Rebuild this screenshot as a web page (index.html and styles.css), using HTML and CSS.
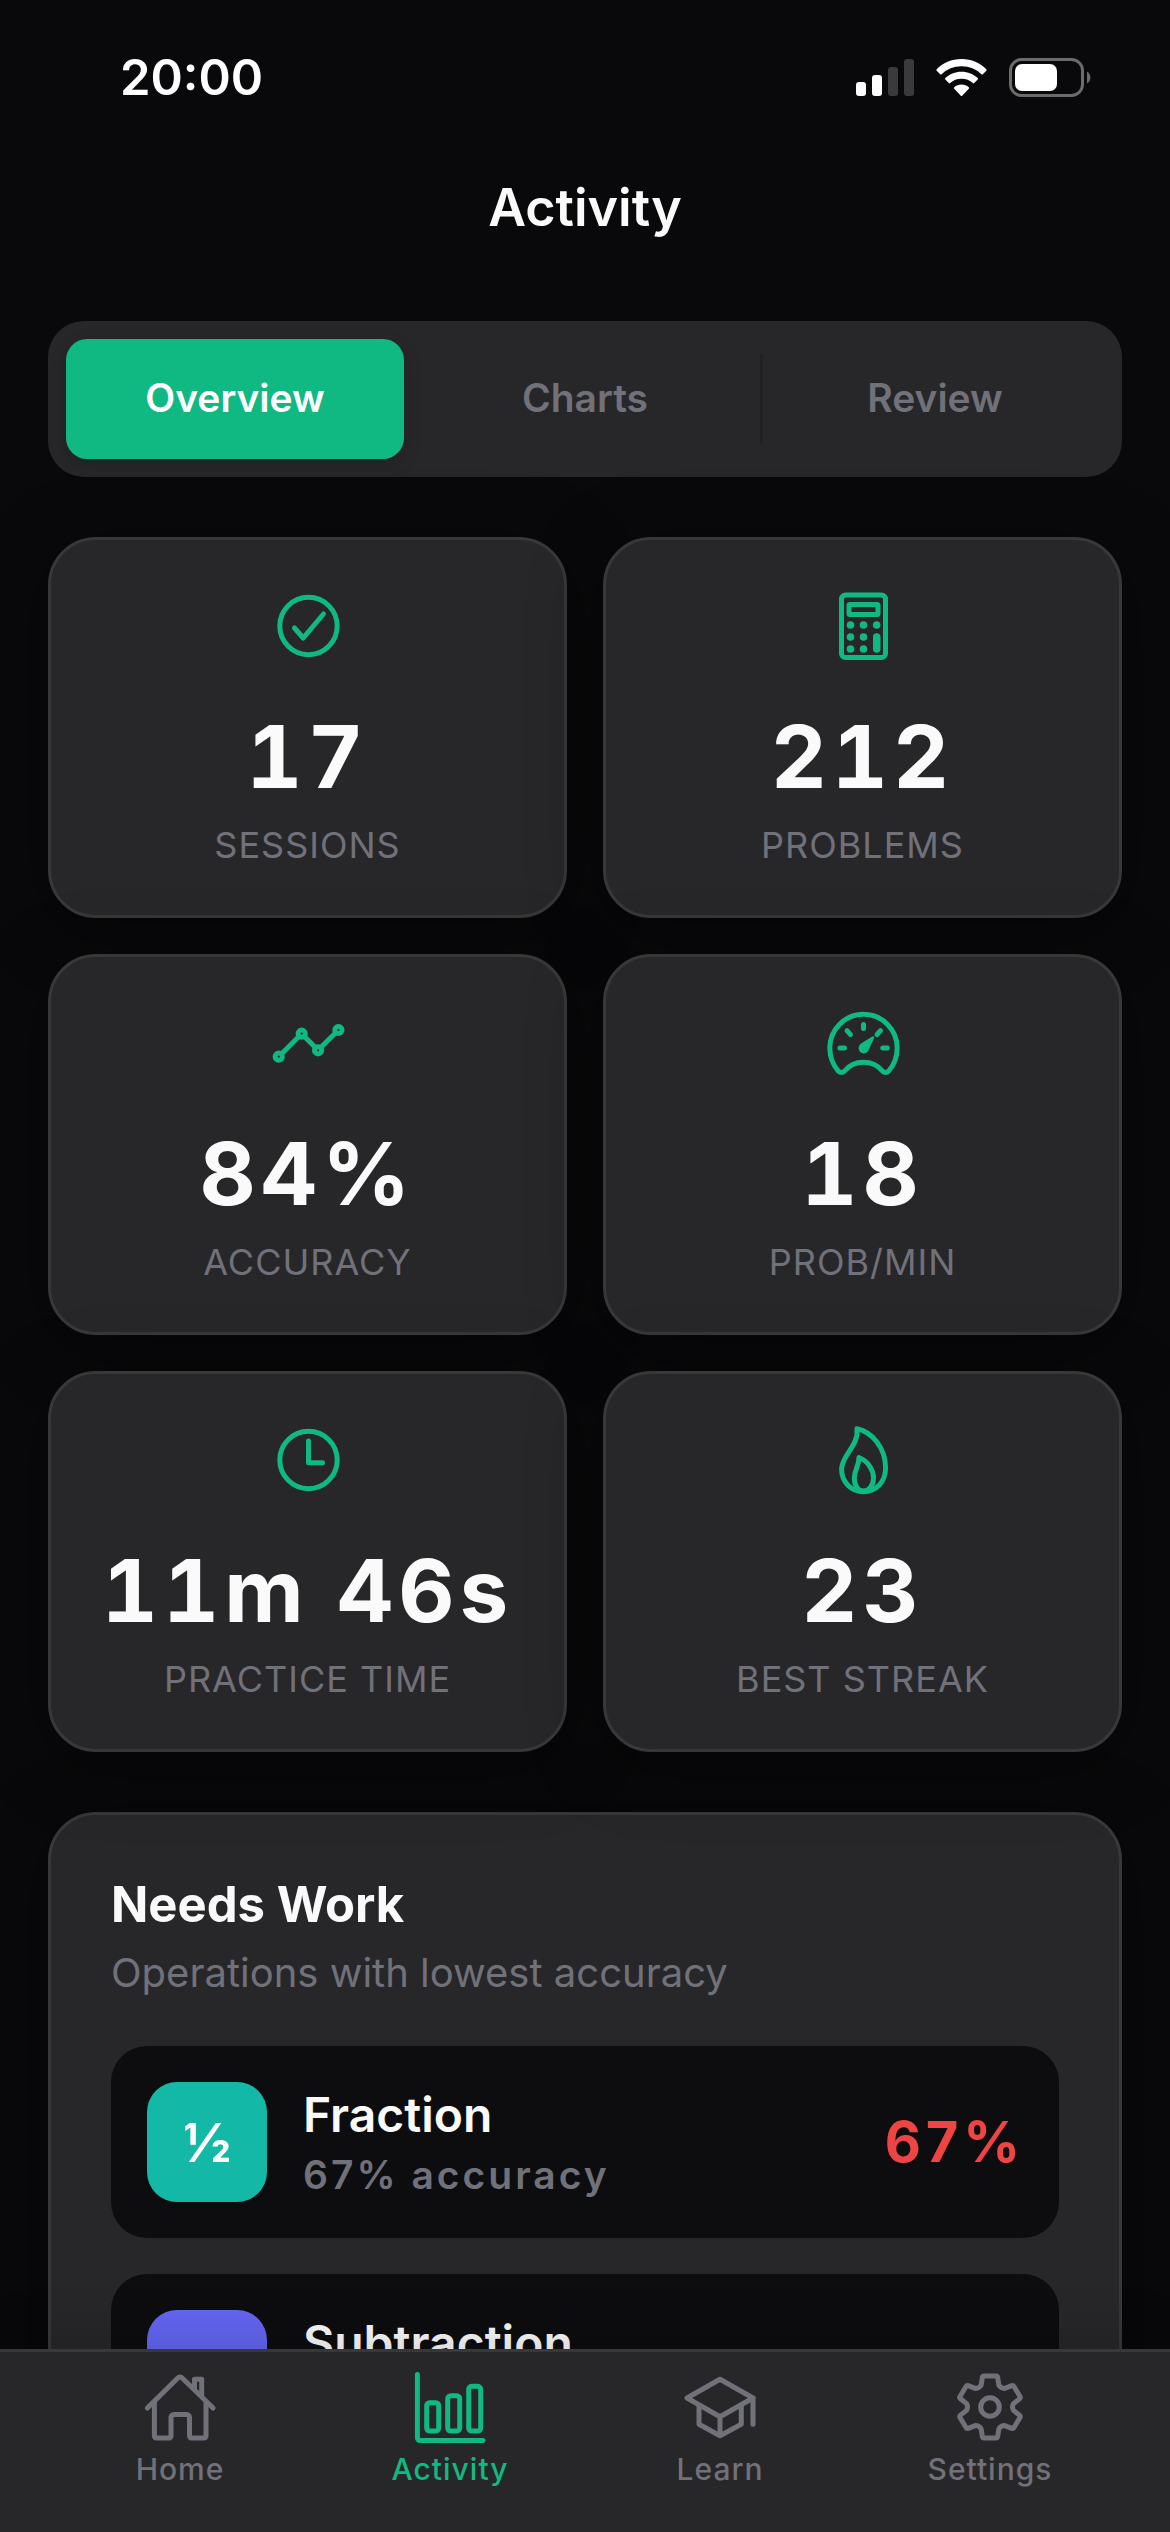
FILE: index.html
```html
<!DOCTYPE html>
<html lang="en">
<head>
    <meta charset="UTF-8">
    <meta name="viewport" content="width=device-width, initial-scale=1.0">
    <title>Activity</title>
    <link rel="stylesheet" href="styles.css">
</head>
<body>
<div class="app">
    <!-- Status bar -->
    <div class="status-bar">
        <span class="status-time">20:00</span>
        <div class="status-icons">
            <svg width="58" height="38" viewBox="0 0 58 38" aria-hidden="true">
                <rect x="0" y="23" width="10" height="14" rx="3" fill="#fff"/>
                <rect x="16" y="16" width="10" height="21" rx="3" fill="#fff"/>
                <rect x="32" y="8" width="10" height="29" rx="3" fill="#3a3a3c"/>
                <rect x="48" y="0" width="10" height="37" rx="3" fill="#3a3a3c"/>
            </svg>
            <svg width="51" height="38" viewBox="0 0 51 38" fill="#fff" aria-hidden="true">
                <path d="M25.500 0C35.500 0 44.300 4 50.300 10.300a1 1 0 0 1 0 1.400L46.800 15.200a1 1 0 0 1-1.400 0A28.500 28.500 0 0 0 25.500 7.300 28.500 28.500 0 0 0 5.600 15.200a1 1 0 0 1-1.400 0L.7 11.700a1 1 0 0 1 0-1.400C6.700 4 15.500 0 25.500 0Z"/>
                <path d="M25.500 12.700c6.300 0 12 2.400 16.200 6.400a1 1 0 0 1 0 1.400l-3.500 3.600a1 1 0 0 1-1.400 0A16.300 16.300 0 0 0 25.500 19.800a16.300 16.300 0 0 0-11.300 4.300 1 1 0 0 1-1.400 0l-3.500-3.600a1 1 0 0 1 0-1.400c4.200-4 9.900-6.400 16.200-6.400Z"/>
                <path d="M25.500 25.500c2.800 0 5.300 1 7.300 2.700a1 1 0 0 1 0 1.500l-6.400 6.700a1.200 1.200 0 0 1-1.800 0l-6.400-6.700a1 1 0 0 1 0-1.500c2-1.700 4.500-2.700 7.300-2.700Z"/>
            </svg>
            <svg width="82" height="39" viewBox="0 0 82 39" aria-hidden="true">
                <rect x="1.500" y="1.500" width="72" height="36" rx="11" fill="none" stroke="#6b6b6c" stroke-width="3"/>
                <rect x="6" y="6" width="42" height="27" rx="7" fill="#fff"/>
                <path d="M78 13.500a7 7 0 0 1 0 12Z" fill="#6b6b6c"/>
            </svg>
        </div>
    </div>

    <header class="header">
        <h1 class="header-title">Activity</h1>
    </header>

    <main class="content">
        <div class="segments" role="tablist">
            <button class="segment active" type="button" role="tab" aria-selected="true">Overview</button>
            <button class="segment" type="button" role="tab" aria-selected="false">Charts</button>
            <button class="segment divided" type="button" role="tab" aria-selected="false">Review</button>
        </div>

        <!-- Stats -->
        <section class="stats">
            <div class="stat-card">
                <svg class="stat-icon" viewBox="0 0 76 76">
                    <circle cx="38.500" cy="38" r="28.700"/>
                    <path d="M24.500 40 33.200 50 53.500 26"/>
                </svg>
                <div class="stat-value">17</div>
                <div class="stat-label">SESSIONS</div>
            </div>
            <div class="stat-card">
                <svg class="stat-icon" viewBox="0 0 76 76">
                    <rect x="16.500" y="7" width="44" height="62.500" rx="4"/>
                    <rect x="24" y="16.500" width="29" height="10" rx="1"/>
                    <g class="solid">
                        <circle cx="25.500" cy="37" r="3.800"/>
                        <circle cx="38.500" cy="37" r="3.800"/>
                        <circle cx="51.700" cy="37" r="3.800"/>
                        <circle cx="25.500" cy="49" r="3.800"/>
                        <circle cx="38.500" cy="49" r="3.800"/>
                        <circle cx="25.500" cy="61" r="3.800"/>
                        <circle cx="38.500" cy="61" r="3.800"/>
                        <rect x="48" y="45.200" width="7.500" height="19.600" rx="3.700"/>
                    </g>
                </svg>
                <div class="stat-value">212</div>
                <div class="stat-label">PROBLEMS</div>
            </div>
            <div class="stat-card">
                <svg class="stat-icon" viewBox="0 0 76 76">
                    <circle cx="8.700" cy="51.700" r="3.600"/>
                    <circle cx="31.700" cy="28.700" r="3.600"/>
                    <circle cx="48.100" cy="45.300" r="3.600"/>
                    <circle cx="68.400" cy="25" r="3.600"/>
                    <path d="M11.500 48.900 28.900 31.500M34.400 31.500 45.400 42.500M50.800 42.500 65.700 27.700"/>
                </svg>
                <div class="stat-value">84%</div>
                <div class="stat-label">ACCURACY</div>
            </div>
            <div class="stat-card">
                <svg class="stat-icon" viewBox="0 0 76 76">
                    <path d="M4.800 43A33.700 33.700 0 0 1 72.200 43C72.200 52 69 60 63.500 66.300a4 4 0 0 1-5.800 0C53 60.500 46 57.300 38.500 57.300S24 60.500 19.300 66.300a4 4 0 0 1-5.800 0C8 60 4.800 52 4.800 43Z"/>
                    <path d="M15 43h4.500M57.800 43h4.500M38.500 19.500v4M22 25.700l3.500 4M55.500 25.700l-3.500 4"/>
                    <path class="solid" d="M47.300 31.500a1.300 1.300 0 0 1 2 1.300L43.500 45.300a5 5 0 0 1-9.500-4Q34.500 39.500 36 38.500Z"/>
                </svg>
                <div class="stat-value">18</div>
                <div class="stat-label">PROB/MIN</div>
            </div>
            <div class="stat-card">
                <svg class="stat-icon" viewBox="0 0 76 76">
                    <circle cx="38.500" cy="38" r="28.700"/>
                    <path d="M38.500 19V40.700H52.500"/>
                </svg>
                <div class="stat-value">11m 46s</div>
                <div class="stat-label">PRACTICE TIME</div>
            </div>
            <div class="stat-card">
                <svg class="stat-icon" viewBox="0 0 76 76">
                    <path d="M32 6.700C46 9.500 60.600 25 60.600 46 60.600 60 51 69.700 38.500 69.700S16.600 60 16.600 47C16.600 33 34 24 32 6.700Z"/>
                    <path d="M34 35.500C43 39 48.500 48 48.500 56 48.500 63.500 44 69 38.500 69S29.300 63.500 29.300 56C29.300 48 34 44 34 35.500Z"/>
                </svg>
                <div class="stat-value">23</div>
                <div class="stat-label">BEST STREAK</div>
            </div>
        </section>

        <!-- Needs work -->
        <section class="panel">
            <h2 class="panel-title">Needs Work</h2>
            <p class="panel-subtitle">Operations with lowest accuracy</p>
            <ul class="operations">
                <li class="operation">
                    <span class="operation-badge fraction">½</span>
                    <div class="operation-info">
                        <div class="operation-name">Fraction</div>
                        <div class="operation-note">67% accuracy</div>
                    </div>
                    <span class="operation-score">67%</span>
                </li>
                <li class="operation">
                    <span class="operation-badge subtraction"></span>
                    <div class="operation-info">
                        <div class="operation-name">Subtraction</div>
                    </div>
                </li>
            </ul>
        </section>
    </main>

    <nav class="tab-bar">
        <a class="tab" href="#home">
            <svg class="tab-icon" viewBox="0 0 72 72">
                <path d="M3.400 37 33.800 7a3 3 0 0 1 4.400 0L69 37"/>
                <path d="M10.400 31V65a2 2 0 0 0 2 2H25a2 2 0 0 0 2-2V46.500a3 3 0 0 1 3-3H42.500a3 3 0 0 1 3 3V65a2 2 0 0 0 2 2H60a2 2 0 0 0 2-2V31"/>
                <path d="M50.500 17V8.300H57.700V25"/>
            </svg>
            <span class="tab-label">Home</span>
        </a>
        <a class="tab active" href="#activity" aria-current="page">
            <svg class="tab-icon" viewBox="0 0 72 72">
                <path d="M3.400 3.500V66.500a3 3 0 0 0 3 3H69"/>
                <rect x="12.700" y="31.700" width="12" height="28.300" rx="3"/>
                <rect x="33.700" y="24.700" width="12" height="35.300" rx="3"/>
                <rect x="54.700" y="15.300" width="12" height="44.700" rx="3"/>
            </svg>
            <span class="tab-label">Activity</span>
        </a>
        <a class="tab" href="#learn">
            <svg class="tab-icon" viewBox="0 0 72 72">
                <path d="M3 27 36 8.300 69 27 36 45.700Z"/>
                <path d="M15 35V53.300L36 64.700 57.300 53.300V35M36 45.700V64.700M69 27V53.300"/>
            </svg>
            <span class="tab-label">Learn</span>
        </a>
        <a class="tab" href="#settings">
            <svg class="tab-icon" viewBox="0 0 72 72">
                <path d="M27.200 14 28.300 6.500Q28.500 5 30 5H42Q43.500 5 43.700 6.500L44.800 14Q46.900 17.500 50.700 17.400L57.800 14.600Q59.200 14.200 60 15.500L66 25.500Q66.700 26.800 65.500 27.800L59.500 32.600Q57.500 36 59.500 39.400L65.500 44.200Q66.700 45.200 66 46.500L60 56.500Q59.200 57.800 57.800 57.400L50.700 54.600Q46.900 54.500 44.800 58L43.700 65.500Q43.500 67 42 67H30Q28.500 67 28.300 65.500L27.200 58Q25.100 54.500 21.300 54.600L14.200 57.400Q12.800 57.800 12 56.500L6 46.500Q5.300 45.200 6.500 44.200L12.500 39.400Q14.500 36 12.500 32.600L6.500 27.800Q5.300 26.800 6 25.500L12 15.500Q12.800 14.200 14.200 14.600L21.300 17.400Q25.100 17.500 27.200 14Z"/>
                <circle cx="36" cy="36" r="9.300"/>
            </svg>
            <span class="tab-label">Settings</span>
        </a>
    </nav>
</div>
</body>
</html>
```
FILE: styles.css
```css
* {
    box-sizing: border-box;
}
body {
    margin: 0;
    background-color: #09090b;
    color: #fafafa;
    font-family: 'Inter', 'Roboto', sans-serif;
}
h1, h2, p, ul {
    margin: 0;
    padding: 0;
}
.app {
    display: flex;
    flex-direction: column;
    height: 100vh;
}

/* Status bar */
.status-bar {
    display: flex;
    align-items: center;
    justify-content: space-between;
    height: 141px;
    padding: 14px 79px 0 120px;
}
.status-time {
    font-size: 49px;
    font-weight: 600;
    line-height: 60px;
    color: #fff;
}
.status-icons {
    display: flex;
    align-items: center;
    gap: 22px;
}
.status-icons svg {
    display: block;
}

.header {
    display: flex;
    align-items: center;
    justify-content: center;
    height: 132px;
    padding-top: 3px;
    border-bottom: 1px solid #070708;
}
.header-title {
    font-size: 52px;
    font-weight: 600;
    line-height: 60px;
}

.content {
    flex: 1;
    min-height: 0;
    padding: 48px;
    overflow-y: auto;
    scrollbar-width: none;
}

/* Overview / Charts / Review switch */
.segments {
    display: grid;
    grid-template-columns: repeat(3, 1fr);
    gap: 12px;
    padding: 18px;
    margin-bottom: 60px;
    background-color: #27272a;
    border-radius: 36px;
}
.segment {
    position: relative;
    height: 120px;
    padding: 0 0 3px;
    border: none;
    border-radius: 21px;
    background: none;
    color: #71717a;
    font-family: inherit;
    font-size: 39px;
    font-weight: 600;
    cursor: pointer;
}
.segment.active {
    background-color: #10b981;
    color: #fff;
    box-shadow: 0 6px 18px rgba(0, 0, 0, 0.15);
}
.segment.divided::before {
    content: "";
    position: absolute;
    left: -6px;
    top: 15px;
    bottom: 15px;
    width: 3px;
    background-color: #212123;
}

/* Stat cards */
.stats {
    position: relative;
    z-index: 1;
    display: grid;
    grid-template-columns: repeat(2, 1fr);
    gap: 36px;
    margin-bottom: 60px;
}
.stat-card,
.panel {
    background-color: #27272a;
    border: 3px solid #38383a;
    border-radius: 48px;
    box-shadow: 0 12px 72px rgba(0, 0, 0, 0.4);
}
.stat-card {
    display: flex;
    flex-direction: column;
    align-items: center;
    padding: 48px 12px;
}
.stat-icon {
    width: 76px;
    height: 76px;
    margin-bottom: 36px;
    fill: none;
    stroke: #10b981;
    stroke-width: 5;
    stroke-linecap: round;
    stroke-linejoin: round;
}
.stat-icon .solid {
    fill: #10b981;
    stroke: none;
}
.stat-value {
    font-size: 87px;
    font-weight: 700;
    line-height: 114px;
    letter-spacing: 5px;
    font-variant-numeric: tabular-nums;
    white-space: nowrap;
}
.stat-label {
    margin-top: 9px;
    font-size: 36px;
    line-height: 44px;
    letter-spacing: 1px;
    color: #71717a;
}

/* Needs work panel */
.panel {
    padding: 60px;
}
.panel-title {
    font-size: 49px;
    font-weight: 700;
    line-height: 60px;
}
.panel-subtitle {
    margin: 12px 0 48px;
    font-size: 40px;
    line-height: 51px;
    color: #71717a;
}
.operations {
    display: flex;
    flex-direction: column;
    gap: 36px;
    list-style: none;
}
.operation {
    display: flex;
    align-items: center;
    gap: 36px;
    padding: 36px;
    background-color: #0d0d0f;
    border-radius: 36px;
}
.operation-badge {
    display: flex;
    align-items: center;
    justify-content: center;
    width: 120px;
    height: 120px;
    border-radius: 30px;
    font-size: 54px;
    font-weight: 700;
    color: #fff;
}
.operation-badge.fraction {
    background-color: #14b8a6;
}
.operation-badge.subtraction {
    background-color: #6366f1;
}
.operation-info {
    display: flex;
    flex: 1;
    flex-direction: column;
    gap: 6px;
    min-height: 114px;
}
.operation-name {
    font-size: 48px;
    font-weight: 600;
    line-height: 60px;
}
.operation-note {
    font-size: 39px;
    font-weight: 600;
    line-height: 48px;
    letter-spacing: 3px;
    color: #71717a;
}
.operation-score {
    font-size: 56px;
    font-weight: 700;
    letter-spacing: 3px;
    font-variant-numeric: tabular-nums;
    color: #ef4444;
}

/* Bottom tabs */
.tab-bar {
    position: relative;
    z-index: 2;
    display: grid;
    grid-template-columns: repeat(4, 1fr);
    padding: 19px 45px 45px;
    background-color: #27272a;
    border-top: 3px solid #38383a;
    box-shadow: 0 -12px 48px rgba(0, 0, 0, 0.15);
}
.tab {
    display: flex;
    flex-direction: column;
    align-items: center;
    gap: 8px;
    color: #71717a;
    text-decoration: none;
}
.tab.active {
    color: #10b981;
}
.tab-icon {
    width: 72px;
    height: 72px;
    fill: none;
    stroke: currentColor;
    stroke-width: 5;
    stroke-linecap: round;
    stroke-linejoin: round;
}
.tab-label {
    font-size: 30px;
    font-weight: 500;
    line-height: 36px;
    letter-spacing: 1px;
}
```
